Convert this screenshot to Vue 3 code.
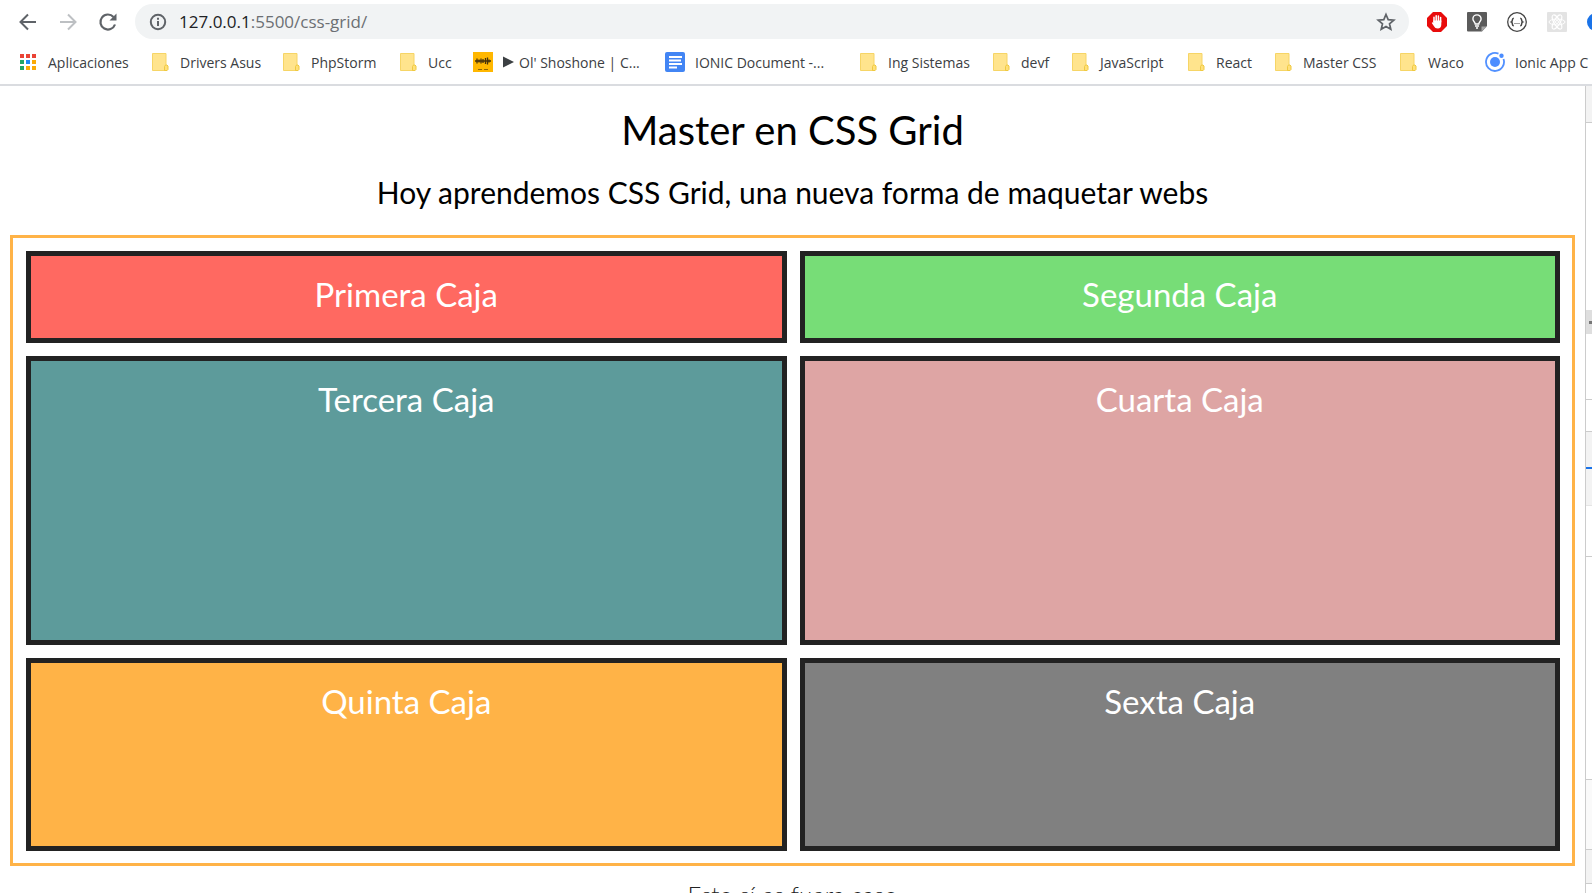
<script setup>
const bookmarks = [
  { icon: 'apps', label: 'Aplicaciones' },
  { icon: 'folder', label: 'Drivers Asus' },
  { icon: 'folder', label: 'PhpStorm' },
  { icon: 'folder', label: 'Ucc' },
  { icon: 'wave', label: "Ol' Shoshone | C...", playing: true },
  { icon: 'doc', label: 'IONIC Document -...' },
  { icon: 'folder', label: 'Ing Sistemas' },
  { icon: 'folder', label: 'devf' },
  { icon: 'folder', label: 'JavaScript' },
  { icon: 'folder', label: 'React' },
  { icon: 'folder', label: 'Master CSS' },
  { icon: 'folder', label: 'Waco' },
  { icon: 'ionic', label: 'Ionic App C' }
]
const appColors = ['#ea4335', '#ea4335', '#ea4335', '#23a566', '#1e88f5', '#fbaa05', '#23a566', '#fbaa05', '#fbaa05']
const boxes = [
  { label: 'Primera Caja', tone: 'red' },
  { label: 'Segunda Caja', tone: 'green' },
  { label: 'Tercera Caja', tone: 'teal' },
  { label: 'Cuarta Caja', tone: 'pink' },
  { label: 'Quinta Caja', tone: 'orange' },
  { label: 'Sexta Caja', tone: 'gray' }
]
</script>

<template>
  <div class="browser">
    <header class="chrome">
      <div class="toolbar">
        <nav class="nav">
          <button type="button" aria-label="Atrás">
            <svg width="20" height="20" viewBox="0 0 20 20" fill="none" stroke="#5f6368" stroke-width="2"><path d="M18 10H3M10 2.500L2.500 10L10 17.500" /></svg>
          </button>
          <button type="button" aria-label="Adelante">
            <svg width="20" height="20" viewBox="0 0 20 20" fill="none" stroke="#bdc0c3" stroke-width="2"><path d="M2 10H17M10 2.500L17.500 10L10 17.500" /></svg>
          </button>
          <button type="button" aria-label="Recargar">
            <svg width="20" height="20" viewBox="0 0 20 20"><path d="M17 12.500A7.500 7.500 0 1 1 15.500 5" fill="none" stroke="#5f6368" stroke-width="2.200" /><path d="M18.500 1.500V8.500H11.500Z" fill="#5f6368" /></svg>
          </button>
        </nav>
        <div class="omnibox">
          <svg width="18" height="18" viewBox="0 0 18 18" fill="none" stroke="#5f6368" stroke-width="2"><circle cx="9" cy="9" r="7.200" /><path d="M9 8v5M9 4.800v2" /></svg>
          <a class="url" href="#"><span class="host">127.0.0.1</span>:5500/css-grid/</a>
          <button type="button" aria-label="Añadir a marcadores">
            <svg width="20" height="20" viewBox="0 0 20 20" fill="none" stroke="#5f6368" stroke-width="1.700"><path d="M10 2.500L12.200 7.700L17.800 8.200L13.500 11.800L14.800 17.300L10 14.400L5.200 17.300L6.500 11.800L2.200 8.200L7.800 7.700Z" /></svg>
          </button>
        </div>
        <div class="extensions">
          <button type="button" aria-label="Bloqueador">
            <svg width="20" height="20" viewBox="0 0 20 20"><path d="M6 0h8l6 6v8l-6 6H6l-6-6V6Z" fill="#e80c0c" /><path d="M7 10V5.200M9.200 9V3.700M11.400 9V4M13.600 10V5.500" stroke="#fff" stroke-width="1.500" stroke-linecap="round" /><path d="M6.300 8.500h8v4c0 2.500-1.300 4-3.500 4-2 0-3-.8-4-2.500L4.800 11c.2-1 1-.7 1.500 0Z" fill="#fff" /></svg>
          </button>
          <button type="button" aria-label="Notas">
            <svg width="20" height="20" viewBox="0 0 20 20" fill="none"><path d="M1 0h18q1 0 1 1v13l-5 5.500H1q-1 0-1-1V1q0-1 1-1Z" fill="#5b5b5b" /><path d="M14.500 19.500V14.500h5.500Z" fill="#a5a5a5" /><path d="M8.200 12c0-2-2.300-2.500-2.300-5a4.100 4.100 0 0 1 8.200 0c0 2.500-2.300 3-2.300 5ZM8 14h4M9 16h2" stroke="#fff" stroke-width="1.400" /></svg>
          </button>
          <button type="button" aria-label="JSON">
            <svg width="20" height="20" viewBox="0 0 20 20" fill="none" stroke="#444"><circle cx="10" cy="10" r="9.300" stroke-width="1.300" /><path d="M6.800 6.200c-2.300 0-.8 3.200-2.300 3.800 1.500.6 0 3.800 2.300 3.800M13.200 6.200c2.300 0 .8 3.200 2.300 3.800-1.500.6 0 3.800-2.300 3.800" stroke-width="1.500" /><path d="M7.500 11.500h1M9.500 11.500h1M11.500 11.500h1" stroke-width="1" /></svg>
          </button>
          <button type="button" aria-label="React">
            <svg width="20" height="20" viewBox="0 0 20 20" fill="none" stroke="#fff" stroke-width="1"><rect width="20" height="20" rx="1" fill="#e3e3e3" stroke="none" /><ellipse cx="10" cy="10" rx="8" ry="3" /><ellipse cx="10" cy="10" rx="8" ry="3" transform="rotate(60 10 10)" /><ellipse cx="10" cy="10" rx="8" ry="3" transform="rotate(120 10 10)" /><circle cx="10" cy="10" r="1.500" /></svg>
          </button>
          <button type="button" aria-label="Perfil">
            <svg width="20" height="20" viewBox="0 0 20 20"><circle cx="9" cy="10" r="9" fill="#1a73e8" /></svg>
          </button>
        </div>
      </div>
      <nav class="bookmarks">
        <a v-for="b in bookmarks" :key="b.label" href="#">
          <svg v-if="b.icon === 'apps'" width="20" height="20" viewBox="0 0 20 20"><rect v-for="(c, i) in appColors" :key="i" :x="2 + (i % 3) * 6" :y="2 + Math.floor(i / 3) * 6" width="4" height="4" :fill="c" /></svg>
          <svg v-else-if="b.icon === 'folder'" width="20" height="20" viewBox="0 0 20 20"><path d="M2.500 1.500h13.500v11l1 1v5h-14.500Z" fill="#ffe48d" stroke="#f6d566" /><path d="M14.500 18.500v-4l1-1.500h1.500l1 1v3.500l-1 1Z" fill="#ffe07a" stroke="#efc940" /></svg>
          <svg v-else-if="b.icon === 'wave'" width="20" height="20" viewBox="0 0 20 20"><rect width="20" height="20" fill="#ffb700" /><path d="M2 9h16M4 6.500v5M6 7.500v3M8 6.500v5M10 7v4M12.500 6v6M14.500 5.500v7M16 7.500v3" stroke="#47320b" stroke-width="1.300" /><path d="M5 17.500h4M11 17.500h4" stroke="#8d6508" /></svg>
          <svg v-else-if="b.icon === 'doc'" width="20" height="20" viewBox="0 0 20 20"><rect width="20" height="20" rx="2" fill="#4285f4" /><path d="M4 5h13M4 8.500h12M4 12h13M4 15.500h8" stroke="#fff" stroke-width="1.800" /></svg>
          <svg v-else width="20" height="20" viewBox="0 0 20 20"><path d="M13.500 1.700A9 9 0 1 0 18.500 7" fill="none" stroke="#5291ff" stroke-width="1.800" /><circle cx="10" cy="10" r="5" fill="#4c8dff" /><circle cx="16.500" cy="3.700" r="2.200" fill="#4c8dff" /></svg>
          <span class="name"><svg v-if="b.playing" class="play" width="12" height="12" viewBox="0 0 12 12"><path d="M0 0.500L11 6L0 11.500Z" fill="#3c4043" /></svg>{{ b.label }}</span>
        </a>
      </nav>
    </header>

    <div class="view">
      <main class="page">
        <h1>Master en CSS Grid</h1>
        <h2>Hoy aprendemos CSS Grid, una nueva forma de maquetar webs</h2>
        <section class="grid">
          <article v-for="box in boxes" :key="box.label" class="box" :class="box.tone">{{ box.label }}</article>
        </section>
        <p class="after">Esto sí es fuera caso</p>
      </main>
      <aside class="devtools">
        <div class="head"></div>
        <div class="upper"><span class="handle"><i></i></span></div>
        <div class="gap"></div>
        <div class="tabs"></div>
        <div class="filter"></div>
        <div class="styles"></div>
        <div class="body"></div>
        <div class="soft"></div>
        <div class="foot"></div>
        <div class="rest"></div>
      </aside>
    </div>
  </div>
</template>

<style>
body { overflow: hidden; background: #fff; }
</style>

<style scoped>
.browser { display: flex; flex-direction: column; height: 100vh; overflow: hidden; font-family: "Open Sans", "Noto Sans", sans-serif; }
.browser * { box-sizing: border-box; }
button { padding: 0; border: 0; background: none; display: flex; flex: none; }
svg { display: block; flex: none; }
.chrome { flex: none; overflow: hidden; border-bottom: 2px solid #dadce0; }
.toolbar { display: flex; align-items: center; height: 43px; }
.nav { display: flex; gap: 20px; padding: 0 17px 0 18px; }
.omnibox { flex: 1; display: flex; align-items: center; gap: 12px; height: 35px; padding: 0 13px 0 14px; border-radius: 18px; background: #f1f3f4; }
.url { flex: 1; font-size: 17px; line-height: 24px; color: #6b6f73; text-decoration: none; }
.host { color: #202124; }
.extensions { display: flex; gap: 20px; width: 183px; padding-left: 18px; overflow: hidden; }
.bookmarks { display: grid; grid-template-columns: 132px 131px 117px 75px 192px 193px 133px 79px 116px 87px 125px 87px 107px; height: 41px; padding-left: 18px; overflow: hidden; }
.bookmarks a { display: flex; align-items: center; gap: 10px; height: 38px; font-size: 14px; color: #3c4043; text-decoration: none; white-space: nowrap; }
.name { display: flex; align-items: center; gap: 4px; }
.view { flex: 1; display: flex; min-height: 0; }
.page { flex: 1; min-width: 0; padding: 20px 10px 0; font-family: Lato, sans-serif; text-align: center; overflow: hidden; }
h1, h2 { margin: 0; font-weight: 400; color: #000; }
h1 { font-size: 40px; line-height: 48px; }
h2 { margin-top: 18px; font-size: 30px; line-height: 40px; }
.grid { display: grid; grid-template-columns: 1fr 1fr; grid-template-rows: 92px 289px 193px; gap: 13px; margin-top: 23px; padding: 13px 12px 12px 13px; border: 3px solid #ffb347; }
.box { padding-top: 18px; border: 5px solid #222; color: #fff; font-size: 33px; line-height: 40px; }
.red { background: #ff6961; }
.green { background: #77dd77; }
.teal { background: #5d9b9b; }
.pink { background: #dea5a4; }
.orange { background: #ffb347; }
.gray { background: #808080; }
.after { margin: 15px 0 0; font-size: 24px; line-height: 28px; color: #222; font-weight: 300; }
.devtools { flex: none; display: flex; flex-direction: column; width: 7px; border-left: 1px solid #ccc; overflow: hidden; }
.devtools > div { flex: none; border-bottom: 1px solid #ccc; }
.devtools .head { height: 37px; background: #f3f3f3; }
.devtools .upper { height: 277px; padding-top: 187px; }
.handle { display: flex; align-items: center; justify-content: flex-end; height: 24px; background: #dedede; }
.handle i { width: 3px; height: 3px; background: #777; }
.devtools .gap { height: 32px; }
.devtools .tabs { height: 37px; background: #f3f3f3; border-bottom: 2px solid #1a73e8; }
.devtools .filter { height: 37px; background: #f3f3f3; border-color: #e5e5e5; }
.devtools .styles { height: 51px; }
.devtools .body { height: 223px; }
.devtools .soft { height: 70px; background: #fafafa; }
.devtools .foot { height: 34px; background: #f3f3f3; }
.devtools .rest { height: 40px; }
</style>
